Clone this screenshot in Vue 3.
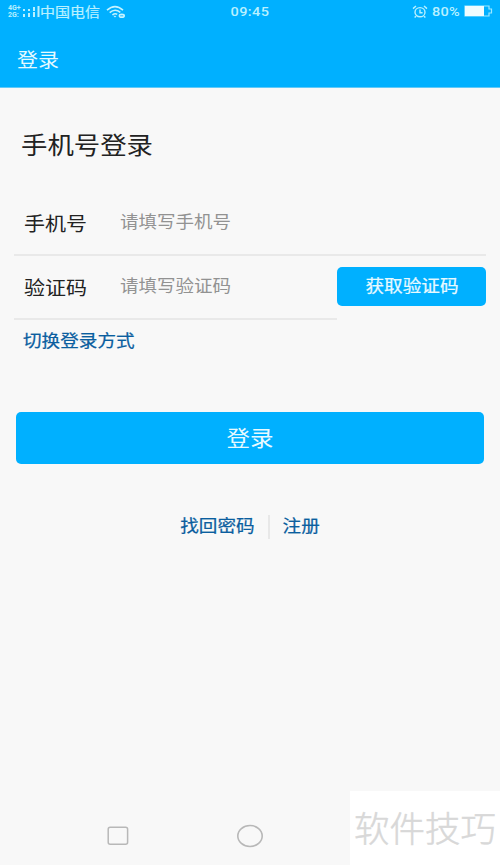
<script setup>
import { ref } from 'vue'

const phone = ref('')
const code = ref('')
</script>

<template>
  <main class="screen">
    <header class="header">
      <div class="status">
        <div class="carrier">
          <div class="network"><span>4G+</span><span>2G:</span></div>
          <svg class="signal" width="17" height="12" viewBox="0 0 17 12" fill="#b9f0ff">
            <path d="M0 3h2v2H0zM0 8h2v3H0zM5 3h2v2H5zM5 7h2v4H5zM10 1h2v4h-2zM10 6h2v5h-2zM14.5 0h2v11h-2z" />
          </svg>
          <span class="flat carrier-name">中国电信</span>
          <svg class="wifi" width="20" height="14" viewBox="0 0 20 14" fill="none" stroke="#c5f3ff" stroke-width="1.6">
            <path d="M1 5.2Q9 -2 17 5.2M3.7 7.6Q9 3 14.3 7.4M6.4 10Q9 7.8 11.2 9.4" />
            <path d="M7.3 10.8L9 12.4l1.4-1.3z" fill="#c5f3ff" stroke="none" />
            <ellipse cx="15.8" cy="10.8" rx="3.2" ry="2.3" fill="#c5f3ff" stroke="none" />
            <path d="M14.2 10.8h3" stroke="#00aeff" stroke-width=".8" />
          </svg>
        </div>
        <span class="clock flat">09:45</span>
        <div class="power">
          <svg width="16" height="14" viewBox="0 0 16 14" fill="none" stroke="#b9f0ff" stroke-width="1.4">
            <ellipse cx="8" cy="7.2" rx="5" ry="4.6" />
            <path d="M1 3.6L4 1M12 1l3 2.6M8 4.6v3.2h2.6M4 11.2l-1.4 1.4M12 11.2l1.4 1.4" />
          </svg>
          <span class="percent flat">80%</span>
          <svg class="battery" width="29" height="12" viewBox="0 0 29 12" fill="none">
            <path d="M1 1h24v3h2.5v4H25v3H1z" stroke="#9be7ff" stroke-width="1.2" />
            <path d="M1 1h19v10H1z" fill="#effcff" />
          </svg>
        </div>
      </div>
      <h1 class="page-title"><span class="flat">登录</span></h1>
    </header>

    <section class="form">
      <h2 class="heading"><span class="flat">手机号登录</span></h2>
      <label class="row">
        <span class="label flat">手机号</span>
        <input v-model="phone" class="field flat" type="tel" placeholder="请填写手机号" />
      </label>
      <div class="code-row">
        <label class="row code">
          <span class="label flat">验证码</span>
          <input v-model="code" class="field flat" placeholder="请填写验证码" />
        </label>
        <button class="get-code"><span class="flat">获取验证码</span></button>
      </div>
      <a class="switch"><span class="flat">切换登录方式</span></a>
      <button class="submit"><span class="flat">登录</span></button>
      <nav class="links">
        <a class="flat">找回密码</a>
        <i class="separator"></i>
        <a class="flat">注册</a>
      </nav>
    </section>

    <footer class="footer">
      <div class="keys">
        <svg width="22" height="20" viewBox="0 0 22 20" fill="none" stroke="#b8b8b8" stroke-width="1.5">
          <rect x="1.2" y="1.2" width="19.4" height="17" rx="2" />
        </svg>
        <svg width="28" height="24" viewBox="0 0 28 24" fill="none" stroke="#b8b8b8" stroke-width="1.6">
          <ellipse cx="14" cy="12" rx="12.2" ry="10.5" />
        </svg>
      </div>
      <div class="watermark">软件技巧</div>
    </footer>
  </main>
</template>

<style>
body {
  margin: 0;
  background: #f8f8f8;
}
</style>

<style scoped>
.screen {
  width: 500px;
  height: 865px;
  display: flex;
  flex-direction: column;
  overflow: hidden;
  background: #f8f8f8;
  color: #222;
  font-family: "Noto Sans CJK SC", sans-serif;
}

.screen * {
  box-sizing: border-box;
}

/* Glyphs are slightly wider than tall throughout the form. */
.flat {
  display: inline-block;
  transform: scaleY(0.9);
  white-space: nowrap;
}

.header {
  flex: none;
  height: 88px;
  background: #00b0ff;
  border-bottom: 1px solid #62c9f8;
  color: #e6faff;
}

.status {
  height: 23px;
  display: grid;
  grid-template-columns: 1fr 40px 1fr;
  align-items: center;
  padding: 0 7px 0 8px;
  color: #b9f0ff;
  font-size: 15px;
  line-height: 20px;
}

.carrier,
.power {
  display: flex;
  align-items: center;
}

.network {
  width: 15px;
  display: flex;
  flex-direction: column;
  font: 700 7px/7px Roboto, sans-serif;
}

.network span {
  height: 7px;
  overflow: hidden;
}

.carrier-name {
  -webkit-text-stroke: 0.25px currentColor;
}

.signal {
  flex: none;
}

.wifi {
  margin-left: 6px;
}

.clock {
  font: 500 14.5px/22px Roboto, sans-serif;
  letter-spacing: 0.4px;
}

.power {
  justify-content: flex-end;
  gap: 4px;
}

.percent {
  font: 500 14.5px/22px Roboto, sans-serif;
  letter-spacing: 0.3px;
}

.battery {
  margin-bottom: 2px;
}

.page-title {
  margin: 0;
  padding: 20px 17px 0;
  font-size: 21px;
  line-height: 32px;
  font-weight: 400;
}

.form {
  flex: 1;
  display: flex;
  flex-direction: column;
  padding: 0 14px;
}

.heading {
  margin: 36px 0 1px 7px;
  font-size: 26.4px;
  line-height: 40px;
  font-weight: 400;
}

.row {
  height: 64px;
  display: flex;
  align-items: center;
  padding-left: 9px;
  border-bottom: 2px solid #e9e9e9;
}

.heading + .row {
  margin-top: 27px;
}

.label {
  width: 97px;
  flex: none;
  padding-left: 1px;
  font-size: 21px;
  line-height: 30px;
}

.field {
  width: 180px;
  padding: 0;
  margin-bottom: 5px;
  border: 0;
  outline: 0;
  background: transparent;
  font: 18.5px/30px "Noto Sans CJK SC", sans-serif;
}

.field::placeholder {
  color: #929292;
  opacity: 1;
}

.code-row {
  display: flex;
  align-items: flex-start;
}

.code {
  width: 323px;
}

.get-code,
.submit {
  padding: 0;
  border: 0;
  background: #00b0ff;
  color: #e8faff;
  font-family: inherit;
}

.get-code {
  width: 149px;
  height: 39px;
  margin-top: 11px;
  padding: 0 0 4px 1px;
  border-radius: 5px;
  font-size: 18.6px;
  line-height: 28px;
  -webkit-text-stroke: 0.25px currentColor;
}

.switch {
  margin: 6px 0 0 9px;
  color: #0b5e9f;
  font-size: 18.6px;
  line-height: 28px;
  -webkit-text-stroke: 0.25px currentColor;
}

.submit {
  height: 52px;
  margin: 58px 2px 0;
  padding-bottom: 2px;
  border-radius: 5px;
  font-size: 23.5px;
  line-height: 36px;
}

.links {
  display: flex;
  justify-content: center;
  align-items: center;
  margin-top: 47px;
  color: #0b5e9f;
  font-size: 18.6px;
  line-height: 28px;
  -webkit-text-stroke: 0.25px currentColor;
}

.separator {
  width: 2px;
  height: 24px;
  margin: 4px 13px 0;
  background: #e8e8e8;
}

.footer {
  flex: none;
  height: 74px;
  display: flex;
  justify-content: space-between;
}

.keys {
  display: flex;
  align-items: center;
  gap: 107px;
  padding: 16px 0 0 107px;
}

.watermark {
  width: 150px;
  background: #fff;
  color: #d8d8d8;
  font-size: 35.5px;
  font-weight: 300;
  line-height: 72px;
  text-align: center;
  white-space: nowrap;
  -webkit-text-stroke: 0.5px currentColor;
}
</style>
